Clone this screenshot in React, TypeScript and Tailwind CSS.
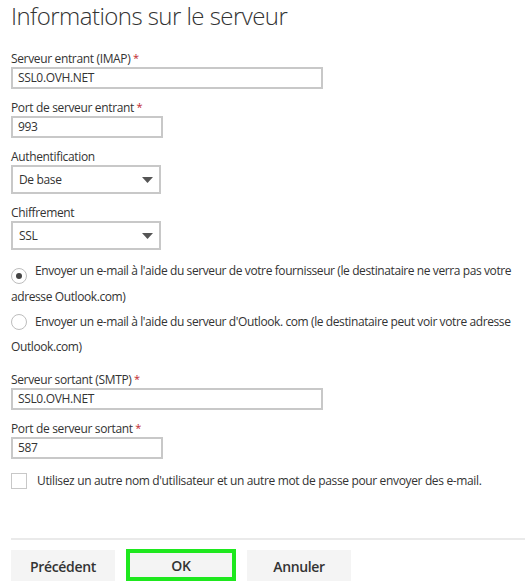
import { useState } from 'react';

// ── Small pieces ──────────────────────────────────────────────────────────────
function FieldLabel({ text, required }: { text: string; required?: boolean }) {
  return (
    <div className="h-[16px] text-[12px] leading-[16px] text-[#333]">
      {text}
      {required && <span className="relative -top-[1px] text-[#c0272d] text-[11px] leading-none"> *</span>}
    </div>
  );
}

function TextBox({ value, wide }: { value: string; wide?: boolean }) {
  return (
    <div
      className={`${wide ? 'w-[312px]' : 'w-[152px]'} h-[22px] border-2 border-[#c8c8c8] bg-white px-[5px] text-[12px] leading-[18px] text-[#333]`}
    >
      {value}
    </div>
  );
}

function Dropdown({ value }: { value: string }) {
  return (
    <div className="w-[150px] h-[29px] border-2 border-[#c8c8c8] bg-white flex items-center justify-between pl-[6px] pr-[6px] text-[12px] text-[#333]">
      <span>{value}</span>
      <svg width="11" height="6" viewBox="0 0 11 6">
        <path d="M0 0 L11 0 L5.5 6 Z" fill="#555" />
      </svg>
    </div>
  );
}

function Radio({ checked, children }: { checked?: boolean; children: React.ReactNode }) {
  return (
    <div className="text-[12px] leading-[25px] text-[#333] tracking-[-0.4px]">
      <span className="inline-flex align-[-4px] w-[16px] h-[16px] rounded-full border border-[#bdbdbd] items-center justify-center mr-[8px]">
        {checked && <span className="w-[6px] h-[6px] rounded-full bg-[#444]" />}
      </span>
      {children}
    </div>
  );
}

export default function App() {
  const [useOther] = useState(false);

  return (
    <div className="w-[525px] h-[581px] overflow-hidden bg-white px-[11px] font-['Open_Sans',sans-serif] tracking-[-0.35px]">
      <h1 className="text-[24px] leading-[32px] font-light text-[#333] mt-0 tracking-[-0.55px]">Informations sur le serveur</h1>

      <div className="mt-[19px] flex flex-col">
        <FieldLabel text="Serveur entrant (IMAP)" required />
        <TextBox value="SSL0.OVH.NET" wide />

        <div className="mt-[11px]">
          <FieldLabel text="Port de serveur entrant" required />
          <TextBox value="993" />
        </div>

        <div className="mt-[11px]">
          <FieldLabel text="Authentification" />
          <Dropdown value="De base" />
        </div>

        <div className="mt-[11px]">
          <FieldLabel text="Chiffrement" />
          <Dropdown value="SSL" />
        </div>

        <div className="mt-[8px]">
          <Radio checked>
            Envoyer un e-mail à l'aide du serveur de votre fournisseur (le destinataire ne verra pas votre adresse Outlook.com)
          </Radio>
          <Radio>
            Envoyer un e-mail à l'aide du serveur d'Outlook. com (le destinataire peut voir votre adresse Outlook.com)
          </Radio>
        </div>

        <div className="mt-[13px]">
          <FieldLabel text="Serveur sortant (SMTP)" required />
          <TextBox value="SSL0.OVH.NET" wide />
        </div>

        <div className="mt-[11px]">
          <FieldLabel text="Port de serveur sortant" required />
          <TextBox value="587" />
        </div>

        <label className="mt-[14px] flex items-center gap-[10px] text-[12px] leading-[16px] text-[#333]">
          <span className="w-[16px] h-[16px] border border-[#c8c8c8] bg-white shrink-0">
            {useOther && <span className="block w-full h-full bg-[#444]" />}
          </span>
          Utilisez un autre nom d'utilisateur et un autre mot de passe pour envoyer des e-mail.
        </label>
      </div>

      <div className="mt-[49px] h-[2px] bg-[#eaeaea] -mr-[11px]" />

      <div className="mt-[10px] flex gap-[11px]">
        <button className="w-[104px] h-[32px] bg-[#f4f4f4] text-[14px] font-semibold text-[#333]">Précédent</button>
        <button className="w-[110px] h-[32px] -mt-[1px] bg-[#f4f4f4] border-[4px] border-[#1ee81e] text-[14px] font-semibold text-[#333]">OK</button>
        <button className="w-[104px] h-[32px] bg-[#f4f4f4] text-[14px] font-semibold text-[#333]">Annuler</button>
      </div>
    </div>
  );
}
